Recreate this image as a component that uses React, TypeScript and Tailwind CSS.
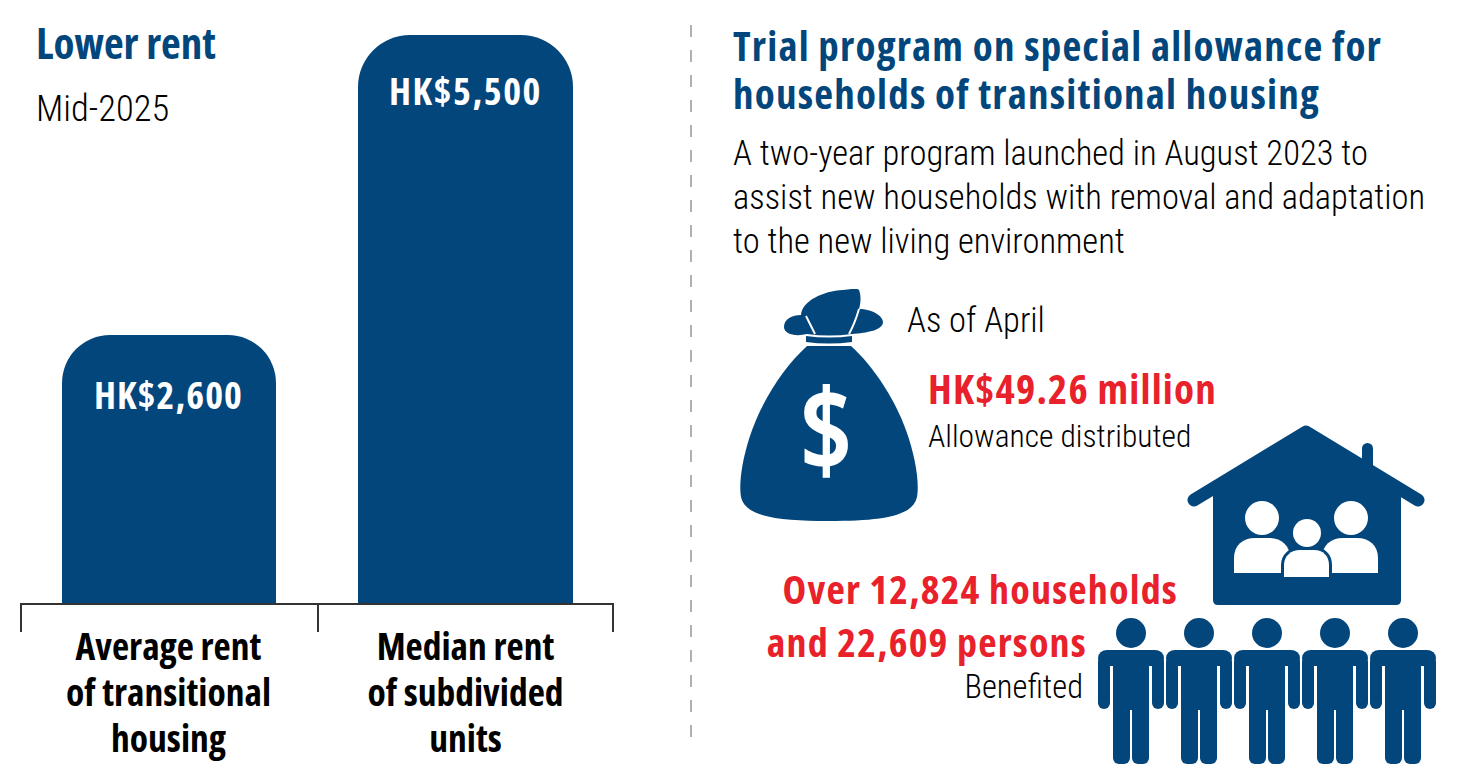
const blue = "#03467c";

function MoneyBag() {
  return (
    <svg viewBox="0 0 180 232" className="w-[180px] h-[232px] shrink-0 ml-[6px]">
      <path
        d="M68,57 C45,78 22,112 10,150 C2,176 0,196 2,208 C6,228 40,232 90,232 C140,232 174,228 178,208 C180,196 178,176 170,150 C158,112 135,78 112,57 Z"
        fill={blue}
      />
      <path d="M67,47 Q90,50 113,47 L113,53 Q90,56 67,53 Z" fill={blue} />
      <path
        d="M68,45 C56,48 45,45 45,38 C45,30 53,26 62,26 C63,12 84,2 104,1 C112,0 118,-1 120,1 C122,6 122,13 120,20 C133,20 144,27 144,33 C144,41 128,44 113,45 Q90,48 68,45 Z"
        fill={blue}
      />
      <path d="M67,27 Q72,37 76,45" stroke="#fff" strokeWidth="2" fill="none" />
      <path d="M120,20 Q116,34 110,45" stroke="#fff" strokeWidth="2" fill="none" />
      <text
        x="87"
        y="182"
        textAnchor="middle"
        fill="#fff"
        fontSize="114"
        fontWeight="700"
        fontFamily="'Open Sans', sans-serif"
      >
        $
      </text>
    </svg>
  );
}

function HouseFamily() {
  return (
    <svg viewBox="0 0 242 184" className="w-[242px] h-[184px] ml-[98px] mt-[135px]">
      <rect x="177" y="19" width="11" height="40" rx="5.5" fill={blue} />
      <path d="M28,64 L121,8 L216,64 L216,176 Q216,181 211,181 L33,181 Q28,181 28,176 Z" fill={blue} />
      <path
        d="M9,76 L121,8 L233,76"
        stroke={blue}
        strokeWidth="13"
        strokeLinecap="round"
        strokeLinejoin="round"
        fill="none"
      />
      <circle cx="77" cy="94" r="17" fill="#fff" />
      <circle cx="166" cy="94" r="17" fill="#fff" />
      <path d="M49,149 V134 C49,121 58,114 70,114 H84 C96,114 105,121 105,134 V149 Z" fill="#fff" />
      <path d="M137,149 V134 C137,121 146,114 158,114 H172 C184,114 193,121 193,134 V149 Z" fill="#fff" />
      <circle cx="122" cy="109" r="14" fill="#fff" stroke={blue} strokeWidth="6" paintOrder="stroke" />
      <path
        d="M99,153 V141 C99,132 106,126 115,126 H129 C138,126 144,132 144,141 V153 Z"
        fill="#fff"
        stroke={blue}
        strokeWidth="6"
        paintOrder="stroke"
      />
    </svg>
  );
}

function People() {
  return (
    <svg viewBox="0 0 338 146" className="w-[338px] h-[146px] ml-[11px] mt-[10px]">
      {[0, 1, 2, 3, 4].map((i) => (
        <g key={i} transform={`translate(${i * 68},0)`} fill={blue}>
          <circle cx="33" cy="15" r="15" />
          <rect x="0" y="32" width="66" height="16" rx="9" />
          <rect x="0" y="38" width="12" height="53" rx="6" />
          <rect x="54" y="38" width="12" height="53" rx="6" />
          <rect x="15" y="32" width="36" height="60" />
          <rect x="15" y="80" width="17" height="66" rx="6" />
          <rect x="34" y="80" width="17" height="66" rx="6" />
        </g>
      ))}
    </svg>
  );
}

// thin text
const light = "font-['Roboto',sans-serif] font-light text-black";

export default function App() {
  return (
    <div className="w-[1465px] h-[784px] bg-white flex overflow-hidden font-['Open_Sans',sans-serif] [font-stretch:75%]">
      {/* lower rent chart */}
      <div className="w-[690px] shrink-0 pt-[35px] pl-[20px]">
        <div className="grid grid-cols-2 w-[594px] h-[568px]">
          <div className="flex flex-col">
            <p className="-mt-[16px] pl-[16px] text-[43px] leading-[48px] font-bold text-[#03467c]">Lower rent</p>
            <p className={`mt-[20px] pl-[16px] text-[36.5px] leading-[44px] ${light}`}>Mid-2025</p>
            <div className="mt-auto mx-auto w-[214px] h-[268px] rounded-t-[48px] bg-[#03467c] pt-[40px] text-center text-white text-[38px] leading-[38px] font-bold tracking-[1.1px]">
              HK$2,600
            </div>
          </div>
          <div className="flex flex-col justify-end">
            <div className="mx-auto w-[215px] h-[568px] rounded-t-[52px] bg-[#03467c] pt-[36px] text-center text-white text-[38px] leading-[38px] font-bold tracking-[1.6px]">
              HK$5,500
            </div>
          </div>
        </div>
        <div className="grid grid-cols-2 w-[594px]">
          <div className="h-[29px] border-t-2 border-l-2 border-[#333]" />
          <div className="h-[29px] border-t-2 border-l-2 border-r-2 border-[#333]" />
        </div>
        <div className="grid grid-cols-2 w-[594px] -mt-[9px] text-center text-[37.5px] leading-[46px] font-bold text-black">
          <p>
            Average rent
            <br />
            of transitional
            <br />
            housing
          </p>
          <p>
            Median rent
            <br />
            of subdivided
            <br />
            units
          </p>
        </div>
      </div>

      {/* divider */}
      <div className="w-[2px] h-[720px] mt-[25px] shrink-0 bg-[repeating-linear-gradient(to_bottom,#b0b0b0_0px,#b0b0b0_12px,transparent_12px,transparent_25px)]" />

      {/* allowance program */}
      <div className="flex-1 pl-[41px] pt-[21px]">
        <h2 className="text-[41px] leading-[48px] font-bold text-[#03467c] tracking-[1.2px] whitespace-nowrap">
          Trial program on special allowance for
          <br />
          households of transitional housing
        </h2>
        <p className={`mt-[14px] text-[34.5px] leading-[44px] whitespace-nowrap ${light}`}>
          A two-year program launched in August 2023 to
          <br />
          assist new households with removal and adaptation
          <br />
          to the new living environment
        </p>

        <div className="flex mt-[26px]">
          <div className="w-[354px] shrink-0 flex flex-col">
            <div className="flex items-start">
              <MoneyBag />
              <div className="-ml-[12px] pt-[9px] whitespace-nowrap">
                <p className={`text-[34.5px] leading-[44px] ${light}`}>As of April</p>
                <p className="mt-[22px] pl-[21px] text-[41px] leading-[48px] font-bold text-[#e8212b] tracking-[1.2px]">HK$49.26 million</p>
                <p className={`mt-[5px] pl-[21px] text-[31.5px] leading-[40px] ${light}`}>Allowance distributed</p>
              </div>
            </div>
            <div className="mt-[44px] text-right whitespace-nowrap">
              <p className="-mr-[91px] text-[40px] leading-[48px] font-bold text-[#e8212b] tracking-[1.2px]">Over 12,824 households</p>
              <p className="mt-[5px] text-[40px] leading-[48px] font-bold text-[#e8212b] tracking-[1.2px]">and 22,609 persons</p>
              <p className={`mt-[3px] pr-[4px] text-[32.5px] leading-[36px] ${light}`}>Benefited</p>
            </div>
          </div>
          <div className="flex flex-col">
            <HouseFamily />
            <People />
          </div>
        </div>
      </div>
    </div>
  );
}
